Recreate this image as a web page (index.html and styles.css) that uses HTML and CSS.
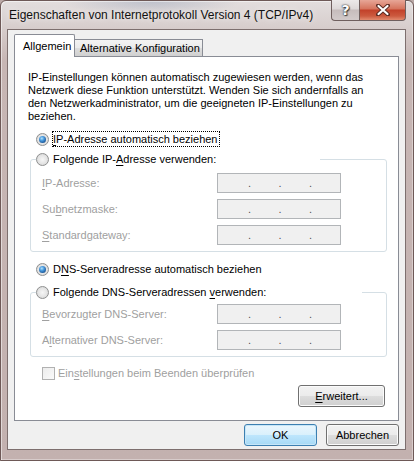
FILE: index.html
```html
<!DOCTYPE html>
<html lang="de">
<head>
  <meta charset="UTF-8">
  <title>Eigenschaften von Internetprotokoll Version 4 (TCP/IPv4)</title>
  <link rel="stylesheet" href="styles.css">
</head>
<body>

  <div class="window">
    <!-- Title bar -->
    <div class="titlebar">
      <span class="title">Eigenschaften von Internetprotokoll Version 4 (TCP/IPv4)</span>
      <div class="caption">
        <span class="cap help">?</span>
        <span class="cap close">
          <svg width="14" height="12" viewBox="0 0 14 12">
            <path d="M2 1.5 L12 10.5 M12 1.5 L2 10.5" stroke="#5a2a22" stroke-width="4" stroke-linecap="round"/>
            <path d="M2.5 2 L11.5 10 M11.5 2 L2.5 10" stroke="#fff" stroke-width="2.2" stroke-linecap="round"/>
          </svg>
        </span>
      </div>
    </div>

    <div class="client">
      <!-- Tabs -->
      <div class="tabs">
        <div class="tab active">Allgemein</div>
        <div class="tab">Alternative Konfiguration</div>
      </div>

      <div class="panel">
        <p class="intro">IP-Einstellungen können automatisch zugewiesen werden, wenn das<br>Netzwerk diese Funktion unterstützt. Wenden Sie sich andernfalls an<br>den Netzwerkadministrator, um die geeigneten IP-Einstellungen zu<br>beziehen.</p>

        <div class="option first">
          <span class="radio checked"></span>
          <span class="focus"><u>I</u>P-Adresse automatisch beziehen</span>
        </div>

        <fieldset class="group ip-group">
          <legend class="option legend-ip">
            <span class="radio"></span>
            <span>Folgende IP-<u>A</u>dresse verwenden:</span>
          </legend>
          <div class="field">
            <span class="label"><u>I</u>P-Adresse:</span>
            <div class="ip"><span>.</span><span>.</span><span>.</span></div>
          </div>
          <div class="field">
            <span class="label">Su<u>b</u>netzmaske:</span>
            <div class="ip"><span>.</span><span>.</span><span>.</span></div>
          </div>
          <div class="field">
            <span class="label"><u>S</u>tandardgateway:</span>
            <div class="ip"><span>.</span><span>.</span><span>.</span></div>
          </div>
        </fieldset>

        <div class="option dns-auto">
          <span class="radio checked"></span>
          <span>D<u>N</u>S-Serveradresse automatisch beziehen</span>
        </div>

        <fieldset class="group dns-group">
          <legend class="option legend-dns">
            <span class="radio"></span>
            <span>Folgende DNS-Serveradressen <u>v</u>erwenden:</span>
          </legend>
          <div class="field">
            <span class="label"><u>B</u>evorzugter DNS-Server:</span>
            <div class="ip"><span>.</span><span>.</span><span>.</span></div>
          </div>
          <div class="field">
            <span class="label">A<u>l</u>ternativer DNS-Server:</span>
            <div class="ip"><span>.</span><span>.</span><span>.</span></div>
          </div>
        </fieldset>

        <div class="check-row">
          <span class="checkbox"></span>
          <span>Ein<u>s</u>tellungen beim Beenden überprüfen</span>
        </div>

        <button class="btn advanced"><u>E</u>rweitert...</button>
      </div>

      <div class="footer">
        <button class="btn default">OK</button>
        <button class="btn">Abbrechen</button>
      </div>
    </div>
  </div>

</body>
</html>
```

FILE: styles.css
```css
* {
  box-sizing: border-box;
}

body {
  margin: 0;
  background: #bba9a7;
  font-family: "Liberation Sans", Arial, sans-serif;
  font-size: 11px;
  color: #000;
}

u {
  text-decoration-thickness: 1px;
  text-underline-offset: 2px;
}

/* window frame */
.window {
  width: 414px;
  height: 461px;
  border: 1px solid #6e5957;
  border-radius: 6px 6px 0 0;
  padding: 0 7px 10px 6px;
  background:
    radial-gradient(ellipse 90px 14px at 150px 0, rgba(120, 140, 170, 0.35), transparent),
    linear-gradient(to bottom, #e3dede 0, #d8cfce 24px, #c7b6b4 60px, #c3b1af 100%);
  box-shadow: inset 1px 1px 0 rgba(255, 255, 255, 0.5), inset -1px -1px 0 rgba(255, 255, 255, 0.35);
}

.titlebar {
  display: flex;
  height: 28px;
}

.title {
  padding: 6px 0 0 2px;
  line-height: 16px;
  font-size: 12px;
  color: #111;
  text-shadow: 0 0 6px rgba(255, 255, 255, 0.9);
  white-space: nowrap;
}

.caption {
  display: flex;
  margin: -1px 0 0 auto;
  height: 21px;
}

.cap {
  display: flex;
  align-items: center;
  justify-content: center;
  height: 21px;
  border: 1px solid #6f5f5e;
  border-top: none;
}

.help {
  width: 28px;
  border-radius: 0 0 0 4px;
  border-right: none;
  background: linear-gradient(to bottom, #ece9e9 0, #ddd8d8 45%, #c6bcbc 50%, #d2caca 100%);
  color: #fff;
  font: bold 14px "DejaVu Sans", sans-serif;
  text-shadow: 0 0 1px #333, 0 0 2px #333, 1px 1px 1px #444;
}

.close {
  width: 47px;
  border-radius: 0 0 4px 0;
  background: linear-gradient(to bottom, #e7a697 0, #d5735c 45%, #c2412a 50%, #cc5a3f 80%, #e28a6e 100%);
}

/* client area */
.client {
  height: 421px;
  border: 1px solid #7d6f6e;
  background: #f0f0f0;
  padding: 4px 6px 0 6px;
}

.tabs {
  display: flex;
  align-items: flex-end;
  height: 22px;
  position: relative;
  z-index: 1;
}

.tab {
  border: 1px solid #898c95;
  border-bottom: none;
  white-space: nowrap;
}

.tab.active {
  width: 61px;
  height: 23px;
  padding: 5px 0 0 8px;
  background: #fff;
  border-radius: 2px 2px 0 0;
  margin-bottom: -1px;
}

.tab:not(.active) {
  width: 129px;
  height: 17px;
  margin-left: -1px;
  padding: 2px 0 0 5px;
  background: linear-gradient(to bottom, #f3f3f3 0, #ebebeb 50%, #dedede 50%, #d0d0d0 100%);
}

.panel {
  display: flex;
  flex-direction: column;
  height: 365px;
  border: 1px solid #898c95;
  background: #fff;
  padding: 14px 0 0 0;
}

.intro {
  margin: 0 0 0 13px;
  line-height: 13px;
  white-space: nowrap;
}

/* radio options */
.option {
  display: flex;
  align-items: center;
  gap: 4px;
  height: 16px;
  white-space: nowrap;
}

.option.first {
  margin: 8px 0 0 21px;
  gap: 3px;
}

.option.dns-auto {
  margin: 9px 0 0 21px;
}

.focus {
  border: 1px dotted #000;
  line-height: 14px;
  padding: 0 1px 0 0;
}

.radio {
  flex: none;
  position: relative;
  width: 13px;
  height: 13px;
  border-radius: 50%;
  border: 1px solid #8e8f8f;
  background: radial-gradient(circle at 50% 50%, #f6f6f6 0, #e6e6e6 50%, #cfcfcf 100%);
}

.radio.checked::after {
  content: "";
  position: absolute;
  left: 2px;
  top: 2px;
  width: 7px;
  height: 7px;
  border-radius: 50%;
  background: radial-gradient(circle at 40% 35%, #b1e3fb 0, #4a9ade 35%, #1b5798 75%, #163f72 100%);
}

/* group boxes */
.group {
  margin: 4px 11px 0 15px;
  border: 1px solid #d5dfe5;
  border-radius: 3px;
  padding: 6px 45px 6px 5px;
  min-width: 0;
}

.group legend {
  padding: 0;
  background: #fff;
}

.legend-ip {
  width: 284px;
}

.dns-group {
  margin-top: 7px;
  padding-top: 4px;
}

.legend-dns {
  width: 326px;
}

.field {
  display: flex;
  align-items: center;
  justify-content: space-between;
  height: 20px;
  padding-left: 6px;
  color: #a0a0a0;
}

.field + .field {
  margin-top: 6px;
}

.ip {
  display: flex;
  width: 124px;
  height: 20px;
  border: 1px solid #b2b5b8;
  background: #f0f0f0;
  padding: 3px 0 0 30px;
  color: #555;
}

.ip span {
  width: 30.5px;
}

/* checkbox */
.check-row {
  display: flex;
  align-items: center;
  gap: 3px;
  height: 16px;
  margin: 8px 0 0 27px;
  color: #a0a0a0;
  white-space: nowrap;
}

.checkbox {
  width: 13px;
  height: 13px;
  border: 1px solid #b1b1b1;
  background: linear-gradient(135deg, #ececec, #fafafa);
}

/* buttons */
.btn {
  height: 22px;
  width: 73px;
  padding: 0;
  border: 1px solid #707070;
  border-radius: 3px;
  background: linear-gradient(to bottom, #f2f2f2 0, #ebebeb 50%, #dddddd 50%, #cfcfcf 100%);
  box-shadow: inset 0 0 0 1px #fbfbfb;
  font: inherit;
  color: #000;
}

.btn.advanced {
  align-self: flex-end;
  width: 87px;
  margin: 4px 13px 0 0;
}

.btn.default {
  border-color: #3c7fb1;
  background: linear-gradient(to bottom, #eaf6fd 0, #d9f0fc 50%, #bee6fd 50%, #a7d9f5 100%);
  box-shadow: inset 0 0 0 1px #c6e6f8;
}

.footer {
  display: flex;
  justify-content: flex-end;
  gap: 9px;
  margin-top: 3px;
}
```
